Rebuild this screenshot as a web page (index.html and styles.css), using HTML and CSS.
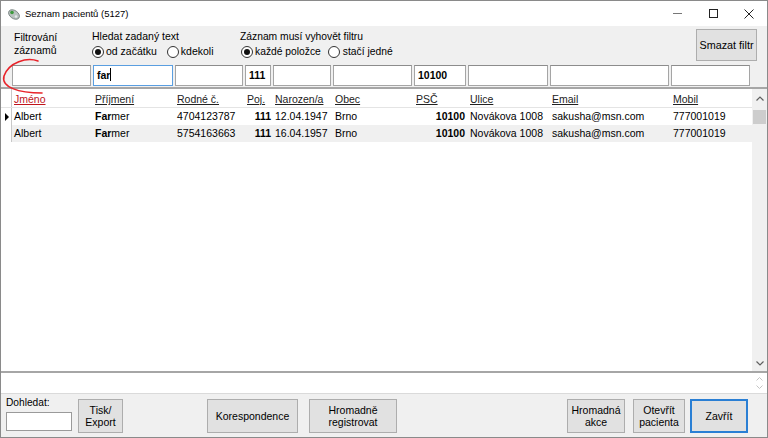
FILE: index.html
```html
<!DOCTYPE html>
<html lang="cs">
<head>
<meta charset="utf-8">
<title>Seznam pacientů</title>
<link rel="stylesheet" href="styles.css">
</head>
<body>
<div class="window">
  <div class="titlebar">
    <svg class="appicon" viewBox="0 0 14 14" width="14" height="14">
      <ellipse cx="7" cy="7.5" rx="6" ry="4" transform="rotate(35 7 7.5)" fill="#b9c2c0" stroke="#6f7a78" stroke-width="0.8"/>
      <circle cx="5" cy="5.5" r="1.8" fill="#3c9a3c"/>
      <circle cx="9" cy="9.5" r="1.2" fill="#e6ecea"/>
    </svg>
    <span class="title">Seznam pacientů (5127)</span>
    <div class="controls">
      <div class="ctl"><span class="ico-min"></span></div>
      <div class="ctl"><span class="ico-max"></span></div>
      <div class="ctl">
        <svg width="10" height="10" viewBox="0 0 10 10"><path d="M0.5 0.5 L9.5 9.5 M9.5 0.5 L0.5 9.5" stroke="#222" stroke-width="1" fill="none"/></svg>
      </div>
    </div>
  </div>

  <div class="toolbar">
    <div class="lbl-filtr">Filtrování<br>záznamů</div>
    <div class="group g1">
      <div class="glabel">Hledat zadaný text</div>
      <div class="radios">
        <span class="radio"><span class="dot on"></span>od začátku</span>
        <span class="radio r2"><span class="dot"></span>kdekoli</span>
      </div>
    </div>
    <div class="group g2">
      <div class="glabel">Záznam musí vyhovět filtru</div>
      <div class="radios">
        <span class="radio"><span class="dot on"></span>každé položce</span>
        <span class="radio r2"><span class="dot"></span>stačí jedné</span>
      </div>
    </div>
    <button class="btn btn-clear">Smazat filtr</button>
  </div>

  <div class="filters">
    <div class="fcell"></div>
    <div class="fcell"><div class="inp"></div></div>
    <div class="fcell"><div class="inp focus">far<span class="caret"></span></div></div>
    <div class="fcell"><div class="inp"></div></div>
    <div class="fcell"><div class="inp">111</div></div>
    <div class="fcell"><div class="inp"></div></div>
    <div class="fcell"><div class="inp"></div></div>
    <div class="fcell"><div class="inp">10100</div></div>
    <div class="fcell"><div class="inp"></div></div>
    <div class="fcell"><div class="inp"></div></div>
    <div class="fcell"><div class="inp"></div></div>
  </div>

  <div class="grid">
    <div class="table">
      <div class="row head">
        <div class="ind"></div>
        <div class="c"><span class="sort">Jméno</span></div>
        <div class="c"><span>Příjmení</span></div>
        <div class="c"><span>Rodné č.</span></div>
        <div class="c"><span>Poj.</span></div>
        <div class="c"><span>Narozen/a</span></div>
        <div class="c"><span>Obec</span></div>
        <div class="c"><span>PSČ</span></div>
        <div class="c"><span>Ulice</span></div>
        <div class="c"><span>Email</span></div>
        <div class="c"><span>Mobil</span></div>
      </div>
      <div class="row">
        <div class="ind"><span class="tri"></span></div>
        <div class="c">Albert</div>
        <div class="c"><b>Far</b>mer</div>
        <div class="c">4704123787</div>
        <div class="c num"><b>111</b></div>
        <div class="c">12.04.1947</div>
        <div class="c">Brno</div>
        <div class="c num psc"><b>10100</b></div>
        <div class="c">Novákova 1008</div>
        <div class="c">sakusha@msn.com</div>
        <div class="c">777001019</div>
      </div>
      <div class="row alt">
        <div class="ind"></div>
        <div class="c">Albert</div>
        <div class="c"><b>Far</b>mer</div>
        <div class="c">5754163663</div>
        <div class="c num"><b>111</b></div>
        <div class="c">16.04.1957</div>
        <div class="c">Brno</div>
        <div class="c num psc"><b>10100</b></div>
        <div class="c">Novákova 1008</div>
        <div class="c">sakusha@msn.com</div>
        <div class="c">777001019</div>
      </div>
    </div>
    <div class="vscroll">
      <svg class="chev" width="8" height="5" viewBox="0 0 8 5"><path d="M0.5 4.5 L4 1 L7.5 4.5" stroke="#606060" stroke-width="1.2" fill="none"/></svg>
      <div class="thumb"></div>
      <div class="track"></div>
      <svg class="chev" width="8" height="5" viewBox="0 0 8 5"><path d="M0.5 0.5 L4 4 L7.5 0.5" stroke="#606060" stroke-width="1.2" fill="none"/></svg>
    </div>
  </div>

  <div class="memo">
    <div class="memo-arrows">
      <svg width="7" height="4" viewBox="0 0 7 4"><path d="M0.5 3.5 L3.5 0.5 L6.5 3.5" stroke="#c4c4c4" stroke-width="1" fill="none"/></svg>
      <svg width="7" height="4" viewBox="0 0 7 4"><path d="M0.5 0.5 L3.5 3.5 L6.5 0.5" stroke="#c4c4c4" stroke-width="1" fill="none"/></svg>
    </div>
  </div>

  <div class="bottom">
    <div class="search">
      <div class="search-lbl">Dohledat:</div>
      <div class="search-inp"></div>
    </div>
    <button class="btn b-tisk">Tisk/<br>Export</button>
    <button class="btn b-kor">Korespondence</button>
    <button class="btn b-hreg">Hromadně<br>registrovat</button>
    <button class="btn b-hakce">Hromadná<br>akce</button>
    <button class="btn b-otevrit">Otevřít<br>pacienta</button>
    <button class="btn b-zavrit">Zavřít</button>
  </div>
</div>

<svg class="annot" width="60" height="100" viewBox="0 0 60 100">
  <path d="M38 61 C27 57 9 62 4 76 C1 87 18 93 42 93" stroke="#e8232a" stroke-width="1.6" fill="none" stroke-linecap="round"/>
</svg>
</body>
</html>
```

FILE: styles.css
```css
* { box-sizing: border-box; margin: 0; padding: 0; }

html, body {
  width: 768px;
  height: 438px;
  overflow: hidden;
}

body {
  position: relative;
  font-family: "Liberation Sans", Arial, sans-serif;
  color: #000;
  background: #f0f0f0;
}

.window {
  --cols: 11px 81px 82px 70px 28px 60px 81px 54px 82px 121px 81px;
  width: 768px;
  height: 438px;
  border: 1px solid #8a8a8a;
  display: flex;
  flex-direction: column;
  background: #f0f0f0;
}

/* title bar */
.titlebar {
  flex: none;
  height: 25px;
  background: #fff;
  display: flex;
  align-items: center;
}
.appicon { margin-left: 6px; flex: none; }
.title {
  margin-left: 4px;
  font-size: 9.5px;
  color: #000;
}
.controls {
  margin-left: auto;
  display: flex;
  height: 25px;
}
.ctl {
  width: 36px;
  height: 25px;
  display: flex;
  align-items: center;
  justify-content: center;
}
.ico-min {
  display: block;
  width: 9px;
  height: 1px;
  background: #777;
}
.ico-max {
  display: block;
  width: 9px;
  height: 9px;
  border: 1px solid #222;
}

/* toolbar */
.toolbar {
  flex: none;
  height: 38px;
  display: flex;
  padding: 0 10px 0 13px;
  font-size: 10.5px;
  line-height: 13px;
}
.lbl-filtr {
  width: 78px;
  padding-top: 5px;
}
.group { padding-top: 4px; }
.g1 { width: 148px; }
.g2 { font-size: 10.3px; }
.radios {
  display: flex;
  align-items: center;
  margin-top: 2px;
  height: 13px;
}
.radio {
  display: flex;
  align-items: center;
  white-space: nowrap;
}
.g1 .r2 { margin-left: 10px; }
.g2 .radio:first-child { margin-left: 1px; }
.g2 .r2 { margin-left: 7px; }
.dot {
  width: 12px;
  height: 12px;
  border: 1px solid #333;
  border-radius: 50%;
  background: #fff;
  display: flex;
  align-items: center;
  justify-content: center;
  margin-right: 2px;
  flex: none;
}
.g2 .r2 .dot { margin-right: 3px; }
.dot.on::after {
  content: "";
  width: 6px;
  height: 6px;
  border-radius: 50%;
  background: #111;
}

.btn {
  font-family: "Liberation Sans", Arial, sans-serif;
  font-size: 10.5px;
  line-height: 12px;
  color: #000;
  background: #e1e1e1;
  border: 1px solid #adadad;
  text-align: center;
  flex: none;
}
.btn-clear {
  margin-left: auto;
  margin-top: 3px;
  width: 61px;
  height: 32px;
  font-size: 10.8px;
}

/* filter inputs */
.filters {
  flex: none;
  height: 23px;
  padding-top: 1px;
  display: grid;
  grid-template-columns: var(--cols);
}
.fcell { padding-right: 2px; }
.inp {
  height: 21px;
  background: #fff;
  border: 1px solid #a5a5a5;
  border-top-color: #8c8c8c;
  font-size: 10.5px;
  font-weight: bold;
  line-height: 19px;
  padding-left: 3px;
  white-space: nowrap;
  overflow: hidden;
}
.inp.focus { border-color: #5a9ee0; }
.caret {
  display: inline-block;
  width: 1px;
  height: 13px;
  background: #000;
  vertical-align: -2px;
}

/* grid */
.grid {
  flex: none;
  height: 286px;
  display: flex;
  background: #fff;
  border-top: 2px solid #a6a6a6;
  border-bottom: 2px solid #a6a6a6;
}
.table { flex: 1; min-width: 0; }
.row {
  display: grid;
  grid-template-columns: var(--cols);
  height: 17px;
  line-height: 17px;
  font-size: 10.5px;
}
.row.head {
  height: 19px;
  line-height: 15px;
  border-bottom: 1px solid #e4e4e4;
}
.row.head .c { padding-top: 3px; }
.row.head span { text-decoration: underline; color: #222; }
.row.head .sort { color: #c0141c; }
.row.alt .c { background: #f0f0f0; }
.ind {
  border-right: 1px solid #c8c8c8;
  display: flex;
  align-items: center;
  padding-left: 4px;
}
.tri {
  width: 0;
  height: 0;
  border-left: 4px solid #000;
  border-top: 4px solid transparent;
  border-bottom: 4px solid transparent;
}
.c {
  padding: 0 2px;
  white-space: nowrap;
  overflow: hidden;
}
.num { text-align: right; }
.psc { padding-right: 3px; }

.vscroll {
  width: 15px;
  flex: none;
  background: #f0f0f0;
  display: flex;
  flex-direction: column;
  align-items: center;
  padding: 7px 0 5px;
}
.thumb {
  width: 13px;
  height: 14px;
  background: #cdcdcd;
  margin-top: 9px;
}
.track { flex: 1; }

/* memo */
.memo {
  flex: none;
  height: 21px;
  background: #fff;
  border-bottom: 1px solid #dadada;
  display: flex;
  justify-content: flex-end;
}
.memo-arrows {
  width: 15px;
  display: flex;
  flex-direction: column;
  align-items: center;
  justify-content: center;
  gap: 4px;
}

/* bottom panel */
.bottom {
  flex: none;
  height: 43px;
  display: flex;
  align-items: flex-start;
  padding: 0 19px 0 5px;
}
.search {
  width: 66px;
  margin-top: 3px;
  font-size: 10.2px;
  line-height: 12px;
}
.search-inp {
  margin-top: 3px;
  height: 19px;
  background: #fff;
  border: 1px solid #9a9a9a;
}
.bottom .btn {
  margin-top: 5px;
  height: 34px;
}
.b-tisk { margin-left: 6px; width: 45px; }
.b-kor { margin-left: 84px; width: 91px; }
.b-hreg { margin-left: 11px; width: 88px; }
.b-hakce { margin-left: auto; width: 58px; }
.b-otevrit { margin-left: 8px; width: 52px; }
.b-zavrit {
  margin-left: 5px;
  width: 58px;
  border: 2px solid #2a7fd4;
}

/* red hand-drawn annotation over the filter row */
.annot {
  position: absolute;
  left: 0;
  top: 0;
  pointer-events: none;
}
```
